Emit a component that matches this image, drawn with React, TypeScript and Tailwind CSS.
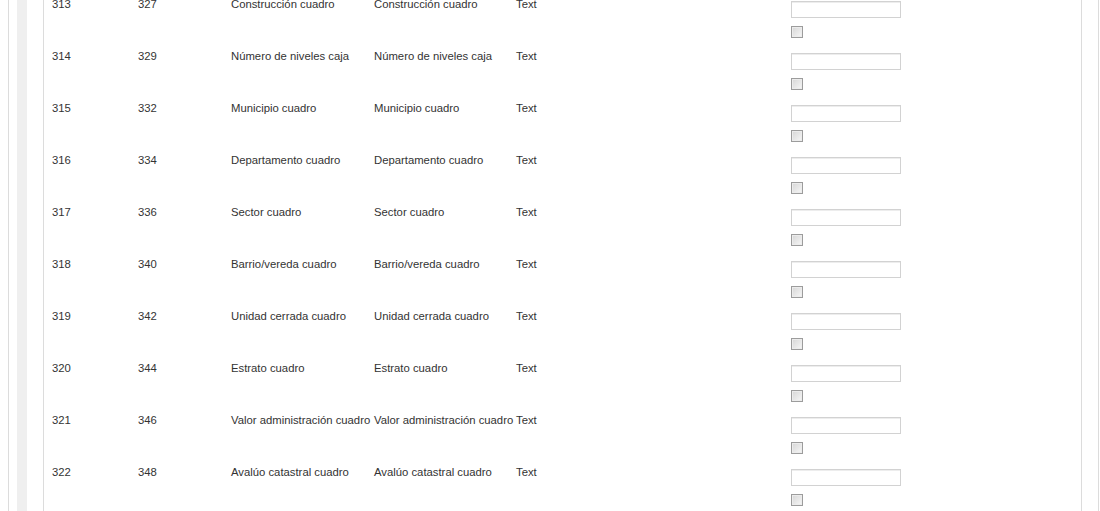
import React from 'react';

type Row = { id: string; code: string; name: string; label: string; type: string };

const rows: Row[] = [
  { id: '313', code: '327', name: 'Construcción cuadro', label: 'Construcción cuadro', type: 'Text' },
  { id: '314', code: '329', name: 'Número de niveles caja', label: 'Número de niveles caja', type: 'Text' },
  { id: '315', code: '332', name: 'Municipio cuadro', label: 'Municipio cuadro', type: 'Text' },
  { id: '316', code: '334', name: 'Departamento cuadro', label: 'Departamento cuadro', type: 'Text' },
  { id: '317', code: '336', name: 'Sector cuadro', label: 'Sector cuadro', type: 'Text' },
  { id: '318', code: '340', name: 'Barrio/vereda cuadro', label: 'Barrio/vereda cuadro', type: 'Text' },
  { id: '319', code: '342', name: 'Unidad cerrada cuadro', label: 'Unidad cerrada cuadro', type: 'Text' },
  { id: '320', code: '344', name: 'Estrato cuadro', label: 'Estrato cuadro', type: 'Text' },
  { id: '321', code: '346', name: 'Valor administración cuadro', label: 'Valor administración cuadro', type: 'Text' },
  { id: '322', code: '348', name: 'Avalúo catastral cuadro', label: 'Avalúo catastral cuadro', type: 'Text' },
];

function Check() {
  // old-style gray checkbox
  return (
    <span className="block w-[12px] h-[12px] border border-[#9c9c9c] bg-gradient-to-br from-[#d6d6d6] to-[#f7f7f7] shadow-[inset_0_0_0_1px_#ececec]" />
  );
}

function FieldRow({ r }: { r: Row }) {
  return (
    <div className="flex items-start h-[52px] pl-[8px]">
      <div className="w-[86px] pt-[2px] leading-[13px]">{r.id}</div>
      <div className="w-[93px] pt-[2px] leading-[13px]">{r.code}</div>
      <div className="w-[143px] pt-[2px] leading-[13px] whitespace-nowrap">{r.name}</div>
      <div className="w-[142px] pt-[2px] leading-[13px] whitespace-nowrap">{r.label}</div>
      <div className="w-[275px] pt-[2px] leading-[13px]">{r.type}</div>
      <div className="flex flex-col pt-[5px]">
        <input
          type="text"
          className="w-[110px] h-[17px] border border-[#d2d2d2] bg-white outline-none shadow-[inset_0_1px_0_#ededed]"
        />
        <div className="mt-[8px]">
          <Check />
        </div>
      </div>
    </div>
  );
}

export default function App() {
  return (
    <div className="h-[511px] w-[1100px] overflow-hidden bg-white text-[11.3px] text-[#333] font-['Liberation_Sans',Arial,sans-serif]">
      <div className="ml-[8px] w-[1091px] h-full flex border-x border-[#dcdcdc]">
        <div className="w-[8px]" />
        <div className="w-[10px] bg-[#efefef]" />
        <div className="w-[16px]" />
        <div className="w-[1039px] h-full border-x border-[#dcdcdc]">
          <div className="-mt-[4px]">
            {rows.map((r) => (
              <FieldRow key={r.id} r={r} />
            ))}
          </div>
        </div>
      </div>
    </div>
  );
}
